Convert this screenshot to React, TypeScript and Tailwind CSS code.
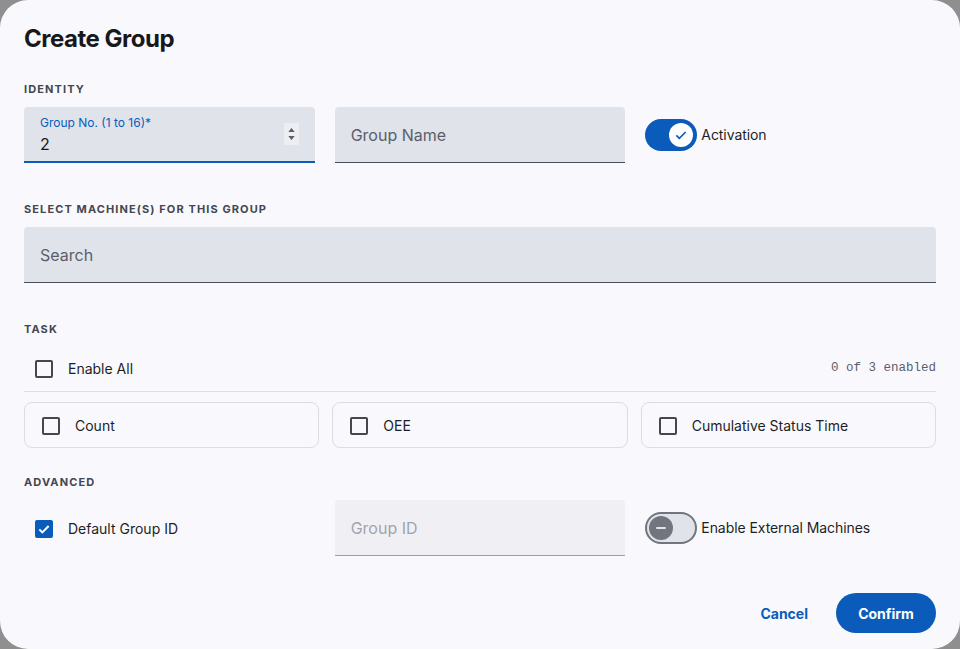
import { useState } from 'react';

const font = { fontFamily: 'Inter, "Noto Sans", sans-serif' };

function SectionLabel({ children }: { children: string }) {
	return <div className="h-4 text-[11px] font-bold uppercase leading-4 tracking-[0.1em] text-[#44474f]">{children}</div>;
}

function Checkbox({ checked }: { checked?: boolean }) {
	if (checked) {
		return (
			<span className="flex h-[18px] w-[18px] shrink-0 items-center justify-center rounded-[2px] bg-[#0b5cba]">
				<svg viewBox="0 0 24 24" className="h-4 w-4" fill="none" stroke="white" strokeWidth={3}>
					<path d="M5 12.5l4.5 4.5L19 7.5" />
				</svg>
			</span>
		);
	}
	return <span className="block h-[18px] w-[18px] shrink-0 rounded-[2px] border-2 border-[#45474f]" />;
}

function Toggle({ on, label }: { on: boolean; label: string }) {
	return (
		<div className="flex items-center gap-1">
			{on ? (
				<span className="flex h-8 w-[52px] items-center justify-end rounded-full bg-[#0b5cba] pr-1">
					<span className="flex h-6 w-6 items-center justify-center rounded-full bg-white">
						<svg viewBox="0 0 24 24" className="h-4 w-4" fill="none" stroke="#0b5cba" strokeWidth={2.5}>
							<path d="M5 12.5l4.5 4.5L19 7.5" />
						</svg>
					</span>
				</span>
			) : (
				<span className="flex h-8 w-[52px] items-center rounded-full border-2 border-[#72757e] bg-[#e1e3ea] pl-[2px]">
					<span className="flex h-6 w-6 items-center justify-center rounded-full bg-[#72757e]">
						<span className="block h-[2px] w-[10px] rounded bg-[#e1e3ea]" />
					</span>
				</span>
			)}
			<span className="text-sm tracking-[-0.005em] text-[#1d1f26]">{label}</span>
		</div>
	);
}

export default function App() {
	const [name, setName] = useState('');

	return (
		<div className="h-[649px] w-[960px] bg-[#8f8f8f]" style={font}>
			<div className="flex h-full flex-col rounded-[28px] bg-[#f9f9fd] px-6 pt-6">
				<h1 className="mt-px text-2xl font-bold leading-7 tracking-[-0.02em] text-[#17181c]">Create Group</h1>

				<div className="mt-[28px]">
					<SectionLabel>Identity</SectionLabel>
				</div>
				<div className="mt-[10px] grid grid-cols-3 gap-5">
					<div className="flex h-14 items-center rounded-t-[4px] border-b-2 border-[#0b5cba] bg-[#e0e3ea] pl-4 pr-4">
						<div className="flex-1">
							<div className="text-xs leading-4 text-[#0b5cba]">Group No. (1 to 16)*</div>
							<div className="mt-[3px] text-base leading-5 text-[#17181c]">2</div>
						</div>
						<div className="flex h-[22px] w-[15px] flex-col items-center justify-center gap-[4px] bg-[#eceef2]">
							<svg viewBox="0 0 8 5" className="h-[4px] w-[7px]">
								<path d="M4 0L8 5H0z" fill="#5b5e69" />
							</svg>
							<svg viewBox="0 0 8 5" className="h-[4px] w-[7px]">
								<path d="M0 0h8L4 5z" fill="#5b5e69" />
							</svg>
						</div>
					</div>
					<input
						value={name}
						onChange={(e) => setName(e.target.value)}
						placeholder="Group Name"
						className="h-14 rounded-t-[4px] border-b border-[#4a4d57] bg-[#e0e3ea] px-4 pt-px text-base text-[#17181c] outline-none placeholder:text-[#5b5e69]"
					/>
					<div className="flex items-center">
						<Toggle on label="Activation" />
					</div>
				</div>

				<div className="mt-[38px]">
					<SectionLabel>Select machine(s) for this group</SectionLabel>
				</div>
				<input
					placeholder="Search"
					className="mt-[10px] h-14 rounded-t-[4px] border-b border-[#4a4d57] bg-[#e0e3ea] px-4 pt-px text-base outline-none placeholder:text-[#5b5e69]"
				/>

				<div className="mt-[38px]">
					<SectionLabel>Task</SectionLabel>
				</div>
				<div className="mt-[11px] flex h-10 items-center gap-[15px] pl-[11px] pt-px">
					<Checkbox />
					<span className="flex-1 text-sm text-[#1d1f26]">Enable All</span>
					<span className="text-[12.5px] text-[#5b5e69]" style={{ fontFamily: '"Liberation Mono", monospace' }}>
						0 of 3 enabled
					</span>
				</div>
				<div className="mt-[3px] border-t border-[#dcdde4]" />
				<div className="mt-[10px] grid grid-cols-3 gap-[13px]">
					{['Count', 'OEE', 'Cumulative Status Time'].map((t) => (
						<div key={t} className="flex h-[46px] items-center gap-[15px] rounded-lg border border-[#dcdde4] pl-[17px] pt-px">
							<Checkbox />
							<span className="text-sm text-[#1d1f26]">{t}</span>
						</div>
					))}
				</div>

				<div className="mt-[26px]">
					<SectionLabel>Advanced</SectionLabel>
				</div>
				<div className="mt-[10px] grid grid-cols-3 gap-5">
					<div className="flex items-center gap-[15px] pl-[11px] pt-px">
						<Checkbox checked />
						<span className="text-sm text-[#1d1f26]">Default Group ID</span>
					</div>
					<input
						disabled
						placeholder="Group ID"
						className="h-14 rounded-t-[4px] border-b border-[#9c9ea6] bg-[#f0f0f4] px-4 pt-px text-base outline-none placeholder:text-[#a2a4ac]"
					/>
					<div className="flex items-center">
						<Toggle on={false} label="Enable External Machines" />
					</div>
				</div>

				<div className="mt-[37px] flex items-center justify-end gap-3">
					<button className="h-10 px-4 pt-px text-sm font-bold text-[#0b5cba]">Cancel</button>
					<button className="h-10 w-[100px] rounded-full bg-[#0b5cba] pt-px text-sm font-bold text-white">Confirm</button>
				</div>
			</div>
		</div>
	);
}
